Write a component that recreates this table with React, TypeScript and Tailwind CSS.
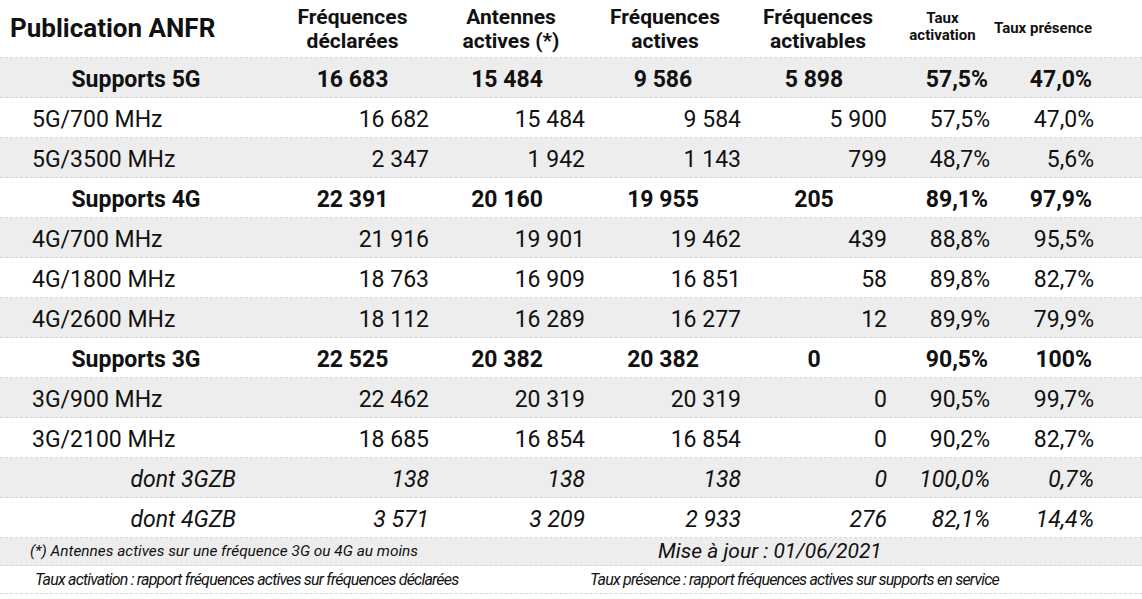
type Row = {
  label: string;
  values: string[];
  kind: "group" | "band" | "zb";
};

const ROWS: Row[] = [
  { label: "Supports 5G", kind: "group", values: ["16 683", "15 484", "9 586", "5 898", "57,5%", "47,0%"] },
  { label: "5G/700 MHz", kind: "band", values: ["16 682", "15 484", "9 584", "5 900", "57,5%", "47,0%"] },
  { label: "5G/3500 MHz", kind: "band", values: ["2 347", "1 942", "1 143", "799", "48,7%", "5,6%"] },
  { label: "Supports 4G", kind: "group", values: ["22 391", "20 160", "19 955", "205", "89,1%", "97,9%"] },
  { label: "4G/700 MHz", kind: "band", values: ["21 916", "19 901", "19 462", "439", "88,8%", "95,5%"] },
  { label: "4G/1800 MHz", kind: "band", values: ["18 763", "16 909", "16 851", "58", "89,8%", "82,7%"] },
  { label: "4G/2600 MHz", kind: "band", values: ["18 112", "16 289", "16 277", "12", "89,9%", "79,9%"] },
  { label: "Supports 3G", kind: "group", values: ["22 525", "20 382", "20 382", "0", "90,5%", "100%"] },
  { label: "3G/900 MHz", kind: "band", values: ["22 462", "20 319", "20 319", "0", "90,5%", "99,7%"] },
  { label: "3G/2100 MHz", kind: "band", values: ["18 685", "16 854", "16 854", "0", "90,2%", "82,7%"] },
  { label: "dont 3GZB", kind: "zb", values: ["138", "138", "138", "0", "100,0%", "0,7%"] },
  { label: "dont 4GZB", kind: "zb", values: ["3 571", "3 209", "2 933", "276", "82,1%", "14,4%"] },
];

const gridCols = "grid grid-cols-[272px_161px_156px_156px_146px_103px_104px_1fr]";
const lineClass = "border-b border-dashed border-[#d6d6d6]";

function DataRow({ row, index }: { row: Row; index: number }) {
  const bg = index % 2 === 0 ? "bg-[#ededed]" : "bg-white";
  const group = row.kind === "group";
  const zb = row.kind === "zb";

  return (
    <div className={`${gridCols} h-10 items-center pt-[5px] text-[23px] ${bg} ${lineClass}`}>
      {group && <div className="text-center font-bold">{row.label}</div>}
      {row.kind === "band" && <div className="pl-8">{row.label}</div>}
      {zb && <div className="pr-9 text-right italic">{row.label}</div>}
      {row.values.map((v, i) => {
        const pct = i >= 4;
        let cls = "pr-1 text-right";
        if (group && !pct) cls = i === 0 ? "text-center" : "pr-2 text-center";
        if (group && pct) cls = "pr-[6px] text-right";
        return (
          <div
            key={i}
            className={`${cls} whitespace-nowrap ${group ? "font-bold" : ""} ${zb ? "italic" : ""}`}
          >
            {v}
          </div>
        );
      })}
      <div />
    </div>
  );
}

export default function App() {
  return (
    <div
      className="h-[599px] w-[1142px] bg-white text-[#111]"
      style={{ fontFamily: "Roboto, 'Liberation Sans', sans-serif" }}
    >
      <div className={`${gridCols} h-[58px] items-center ${lineClass}`}>
        <div className="pl-[10px] text-[26px] font-bold">Publication ANFR</div>
        <div className="text-center text-[21px] leading-6 font-bold">
          Fréquences
          <br />
          déclarées
        </div>
        <div className="text-center text-[21px] leading-6 font-bold">
          Antennes
          <br />
          actives (*)
        </div>
        <div className="pr-1 text-center text-[21px] leading-6 font-bold">
          Fréquences
          <br />
          actives
        </div>
        <div className="text-center text-[21px] leading-6 font-bold">
          Fréquences
          <br />
          activables
        </div>
        <div className="-mt-1 text-center text-[15px] leading-[17px] font-bold">
          Taux
          <br />
          activation
        </div>
        <div className="-mt-[1px] pr-2 text-center text-[15px] whitespace-nowrap font-bold">Taux présence</div>
        <div />
      </div>

      {ROWS.map((row, i) => (
        <DataRow key={row.label} row={row} index={i} />
      ))}

      <div className={`flex h-[28px] items-center bg-[#ededed] ${lineClass}`}>
        <div className="w-[658px] pl-[30px] text-[15.4px] italic">
          (*) Antennes actives sur une fréquence 3G ou 4G au moins
        </div>
        <div className="text-[21px] italic">Mise à jour : 01/06/2021</div>
      </div>

      <div className={`flex h-[28px] items-center bg-white ${lineClass}`}>
        <div className="w-[590px] pl-[35px] text-[16px] tracking-[-0.05em] italic">
          Taux activation : rapport fréquences actives sur fréquences déclarées
        </div>
        <div className="text-[16px] tracking-[-0.05em] italic">
          Taux présence : rapport fréquences actives sur supports en service
        </div>
      </div>
    </div>
  );
}
